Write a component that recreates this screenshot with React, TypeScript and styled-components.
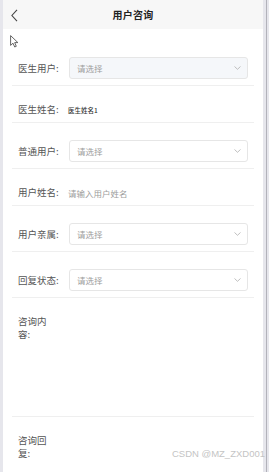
import React from "react";
import styled, { createGlobalStyle } from "styled-components";

const GlobalStyle = createGlobalStyle`
  html, body {
    margin: 0;
    padding: 0;
    background: #e6e6ec;
    font-family: "Noto Sans CJK SC", "Noto Sans", sans-serif;
  }
  * { box-sizing: border-box; }
`;

type Field =
  | { kind: "select"; label: string; disabled?: boolean }
  | { kind: "text"; label: string; value?: string; placeholder?: string }
  | { kind: "area"; label: string };

const fields: Field[] = [
  { kind: "select", label: "医生用户:", disabled: true },
  { kind: "text", label: "医生姓名:", value: "医生姓名1" },
  { kind: "select", label: "普通用户:" },
  { kind: "text", label: "用户姓名:", placeholder: "请输入用户姓名" },
  { kind: "select", label: "用户亲属:" },
  { kind: "select", label: "回复状态:" },
  { kind: "area", label: "咨询内容:" },
  { kind: "area", label: "咨询回复:" },
];

const App: React.FC = () => {
  return (
    <>
      <GlobalStyle />
      <Frame>
        <TopBar />
        <Body>
          <SideEdge />
          <Page>
            <Header>
              <BackButton>
                <svg width="7" height="13" viewBox="0 0 7 13">
                  <path d="M6 0.8 L0.9 6.5 L6 12.2" fill="none" stroke="#444" strokeWidth="1.1" />
                </svg>
              </BackButton>
              <Title>用户咨询</Title>
            </Header>
            <Form>
              {fields.map((f, i) => (
                <Item key={i} $top={f.kind === "area"}>
                  <Label $wrap={f.kind === "area"}>
                    <span>{f.label}</span>
                  </Label>
                  <Content>
                    {f.kind === "select" && (
                      <Select $disabled={f.disabled}>
                        <Placeholder>请选择</Placeholder>
                        <svg width="7" height="4" viewBox="0 0 7 4">
                          <path d="M0.5 0.5 L3.5 3.3 L6.5 0.5" fill="none" stroke="#b8b8b8" strokeWidth="0.9" />
                        </svg>
                      </Select>
                    )}
                    {f.kind === "text" &&
                      (f.value ? <Value>{f.value}</Value> : <Placeholder>{f.placeholder}</Placeholder>)}
                    {f.kind === "area" && <AreaBox />}
                  </Content>
                </Item>
              ))}
            </Form>
            <Cursor>
              <svg width="10" height="13" viewBox="0 0 10 13">
                <path
                  d="M0.6 0.6 L0.6 10.4 L3 8.2 L4.7 12 L6.3 11.3 L4.7 7.6 L7.9 7.6 Z"
                  fill="#fff"
                  stroke="#555"
                  strokeWidth="0.9"
                  strokeLinejoin="round"
                />
              </svg>
            </Cursor>
          </Page>
          <SideEdge />
          <ScrollLine />
          <TailEdge />
        </Body>
        <Watermark>CSDN @MZ_ZXD001</Watermark>
      </Frame>
    </>
  );
};

const Frame = styled.div`
  position: relative;
  width: 269px;
  height: 472px;
  display: flex;
  flex-direction: column;
  overflow: hidden;
`;

const TopBar = styled.div`
  height: 3px;
  background: #111;
`;

const Body = styled.div`
  flex: 1;
  display: flex;
  flex-direction: row;
`;

const SideEdge = styled.div`
  width: 3px;
  background: #e6e6ec;
`;

const ScrollLine = styled.div`
  width: 1px;
  background: #b2b2ba;
`;

const TailEdge = styled.div`
  width: 2px;
  background: #e6e6ec;
`;

const Page = styled.div`
  position: relative;
  flex: 1;
  background: #fff;
  display: flex;
  flex-direction: column;
`;

const Header = styled.div`
  position: relative;
  height: 29px;
  background: #f7f7f7;
  display: flex;
  align-items: center;
  justify-content: center;
`;

const BackButton = styled.div`
  position: absolute;
  left: 8px;
  top: 9px;
  display: flex;
`;

const Title = styled.div`
  font-size: 10px;
  font-weight: 700;
  color: #222;
  letter-spacing: 0.2px;
`;

const Form = styled.div`
  display: flex;
  flex-direction: column;
  padding: 11px 9px 0;
`;

const Item = styled.div<{ $top?: boolean }>`
  display: flex;
  align-items: ${(p) => (p.$top ? "flex-start" : "center")};
  padding: 17px 0 6px;
  border-bottom: 1px solid #efefef;
`;

const Label = styled.div<{ $wrap?: boolean }>`
  width: 56px;
  flex-shrink: 0;
  padding-left: 6px;
  font-size: 9.5px;
  line-height: 13px;
  color: #555;
  white-space: ${(p) => (p.$wrap ? "normal" : "nowrap")};
  span {
    display: block;
    width: ${(p) => (p.$wrap ? "34px" : "auto")};
  }
`;

const Content = styled.div`
  flex: 1;
  min-height: 13px;
  display: flex;
  align-items: center;
  padding-right: 6px;
`;

const Select = styled.div<{ $disabled?: boolean }>`
  flex: 1;
  height: 22px;
  margin-left: 1px;
  padding: 0 6px 0 7px;
  display: flex;
  align-items: center;
  justify-content: space-between;
  border: 1px solid #e6e6e6;
  border-radius: 3px;
  background: ${(p) => (p.$disabled ? "#f5f7fa" : "#fff")};
`;

const Placeholder = styled.span`
  font-size: 8.5px;
  color: #9d9d9d;
`;

const Value = styled.span`
  font-size: 6.5px;
  font-weight: 500;
  color: #333;
`;

const AreaBox = styled.div`
  height: 95px;
`;

const Cursor = styled.div`
  position: absolute;
  left: 7px;
  top: 35px;
  display: flex;
`;

const Watermark = styled.div`
  position: absolute;
  right: 4px;
  bottom: 13px;
  font-family: "Liberation Sans", Arial, sans-serif;
  font-size: 9.5px;
  color: #c4c4c4;
`;

export default App;
